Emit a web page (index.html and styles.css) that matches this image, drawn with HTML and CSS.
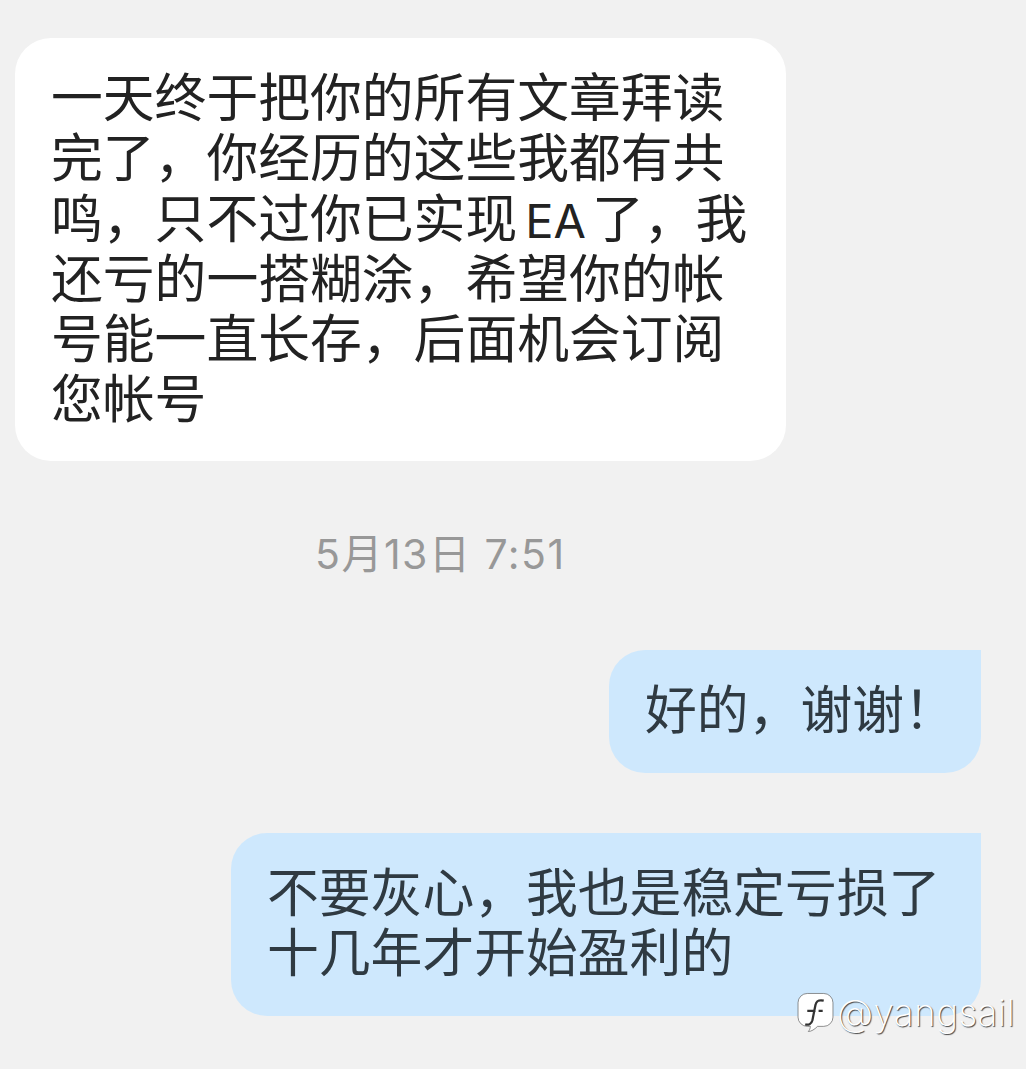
FILE: index.html
```html
<!DOCTYPE html>
<html lang="zh">
<head>
<meta charset="utf-8">
<title>Chat</title>
<link rel="stylesheet" href="styles.css">
</head>
<body>
<main class="chat">
  <div class="bubble incoming">一天终于把你的所有文章拜读<br>完了，你经历的这些我都有共<br>鸣，只不过你已实现<span class="latin">EA</span>了，我<br>还亏的一搭糊涂，希望你的帐<br>号能一直长存，后面机会订阅<br>您帐号</div>
  <div class="time">5月13日 7:51</div>
  <div class="bubble outgoing first">好的，谢谢！</div>
  <div class="bubble outgoing second">不要灰心，我也是稳定亏损了<br>十几年才开始盈利的</div>
</main>
<div class="mark">
  <svg class="mark-icon" viewBox="0 0 36 40" aria-hidden="true">
    <path d="M10 1h16a9 9 0 0 1 9 9v14a9 9 0 0 1-9 9H20c-3 3-6 5-9 5 1-1 2-3 2-5h-3a9 9 0 0 1-9-9V10a9 9 0 0 1 9-9z" fill="#fff" stroke="#666" stroke-width=".7"/>
    <path d="M26 8c-5-1-7 0-8 4l-3 15c-1 4-4 5-7 4M10 18h8M21 18h4" fill="none" stroke="#333" stroke-width="2.2"/>
  </svg>
  <span>@yangsail</span>
</div>
</body>
</html>
```

FILE: styles.css
```css
html, body { margin: 0; padding: 0; }
body {
  width: 1026px;
  height: 1069px;
  overflow: hidden;
  background: #f1f1f1;
  font-family: "Noto Sans CJK SC", "Noto Sans", sans-serif;
  position: relative;
}
.chat {
  display: flex;
  flex-direction: column;
  padding: 38px 45px 0 15px;
}
.bubble {
  font-size: 51.8px;
  line-height: 60.3px;
  color: #222;
  box-sizing: border-box;
}
.latin {
  font-family: "Inter", sans-serif;
  font-size: 47px;
  line-height: 0;
  margin: 0 6px 0 8px;
}
.incoming {
  width: 771px;
  height: 423px;
  padding: 27px 0 0 36px;
  background: #fff;
  border-radius: 36px;
}
.time {
  margin: 69px 0 0 300px;
  font-size: 41px;
  letter-spacing: 1.5px;
  line-height: 48px;
  color: #989898;
  font-family: "Inter", "Noto Sans CJK SC", sans-serif;
}
.outgoing {
  align-self: flex-end;
  background: #cee8fd;
  border-radius: 36px 0 36px 36px;
  color: #2f3a42;
}
.first {
  margin-top: 72px;
  width: 372px;
  height: 123px;
  padding: 27px 0 0 36px;
}
.second {
  margin-top: 60px;
  width: 750px;
  height: 183px;
  padding: 27px 0 0 36px;
}
.mark {
  position: absolute;
  left: 797px;
  top: 989px;
  display: flex;
  align-items: center;
  gap: 3px;
  color: #fff;
  font-family: "Inter", sans-serif;
  font-weight: 200;
  font-size: 37px;
  letter-spacing: .4px;
  line-height: 48px;
  text-shadow: 1px 1px 1px #444;
}
.mark-icon { width: 37px; height: 42px; }
```
